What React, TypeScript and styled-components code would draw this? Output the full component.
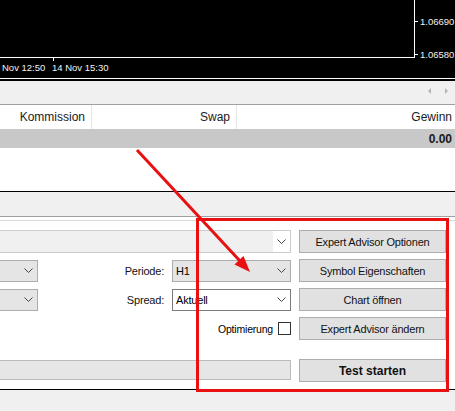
import styled, { createGlobalStyle } from "styled-components";

const GlobalStyle = createGlobalStyle`
    html, body {
        margin: 0;
        padding: 0;
        background: #f0f0f0;
    }
    body {
        font-family: "Liberation Sans", Arial, sans-serif;
        color: #000;
    }
`;

const Page = styled.div`
    position: relative;
    display: flex;
    flex-direction: column;
    width: 455px;
    height: 411px;
    overflow: hidden;
    background: #f0f0f0;
`;

const ChartPane = styled.div`
    height: 78px;
    background: #000;
    border-bottom: 1px solid #fff;
    box-shadow: 0 1px 0 #000, 0 2px 0 #000;
    margin-bottom: 2px;

    svg {
        display: block;
    }

    text {
        font-family: "Liberation Sans", Arial, sans-serif;
        font-size: 9.5px;
        fill: #f2f2f2;
    }
`;

const Toolbar = styled.div`
    display: flex;
    justify-content: flex-end;
    align-items: center;
    column-gap: 10px;
    height: 23px;
    padding-right: 6px;
    background: #f0f0f0;
    border-bottom: 1px solid #a0a0a0;
`;

const ScrollArrow = styled.svg`
    width: 6px;
    height: 8px;
    margin-bottom: 4px;
`;

const TableRow = styled.div<{ $head?: boolean }>`
    display: grid;
    grid-template-columns: 92px 145px 1fr;
    height: ${(p) => (p.$head ? "24px" : "19px")};
    background: ${(p) => (p.$head ? "#fff" : "#c8c8c8")};
    font-size: 12px;
    font-weight: ${(p) => (p.$head ? 400 : 700)};
    color: #1a1a1a;
`;

const TableCell = styled.div<{ $last?: boolean }>`
    display: flex;
    align-items: center;
    justify-content: flex-end;
    padding-right: ${(p) => (p.$last ? "3px" : "6px")};
    border-right: ${(p) => (p.$last ? "none" : "1px solid #e5e5e5")};
`;

const TableRowCell = styled(TableCell)`
    border-right: none;
`;

const TableBody = styled.div`
    height: 43px;
    background: #fff;
    border-bottom: 1px solid #000;
`;

const TabStrip = styled.div`
    height: 24px;
    background: #f0f0f0;
    border-bottom: 1px solid #a0a0a0;
`;

const TabGap = styled.div`
    height: 3px;
    background: #fff;
    border-bottom: 1px solid #d9d9d9;
`;

const SettingsPanel = styled.div`
    display: grid;
    grid-template-columns: 38px 118px 119px 147px;
    grid-template-rows: repeat(4, 23px) 36px;
    column-gap: 8px;
    row-gap: 6px;
    padding: 9px 9px 7px 0;
    background: #fff;
    border-bottom: 1px solid #000;
`;

const Footer = styled.div`
    flex: 1;
    background: #f0f0f0;
`;

const ComboBox = styled.div<{ $variant: "disabled" | "list" | "edit"; $span?: string }>`
    grid-column: ${(p) => p.$span || "auto"};
    align-self: center;
    display: flex;
    align-items: center;
    height: ${(p) => (p.$variant === "disabled" ? "23px" : "22px")};
    box-sizing: border-box;
    border: 1px solid
        ${(p) => (p.$variant === "edit" ? "#7a7a7a" : p.$variant === "disabled" ? "#cccccc" : "#adadad")};
    border-left: ${(p) => (p.$span ? "none" : "")};
    background: ${(p) => (p.$variant === "list" ? "#e5e5e5" : p.$variant === "disabled" ? "#f0f0f0" : "#fff")};
    font-size: 11px;
    letter-spacing: -0.2px;
`;

const ComboText = styled.span`
    flex: 1;
    padding-left: 3px;
    white-space: nowrap;
`;

const ComboArrow = styled.div<{ $white?: boolean }>`
    display: flex;
    align-items: center;
    justify-content: center;
    width: 17px;
    align-self: stretch;
    background: ${(p) => (p.$white ? "#fff" : "transparent")};
`;

const LeftCombo = styled(ComboBox)`
    border-left: none;
    justify-content: flex-end;
`;

const FieldLabel = styled.div`
    display: flex;
    align-items: center;
    justify-content: flex-end;
    font-size: 11px;
    letter-spacing: -0.2px;
    color: #111;
`;

const CheckRow = styled.div`
    grid-column: 3;
    grid-row: 4;
    display: flex;
    align-items: center;
    justify-content: flex-end;
    column-gap: 5px;
    font-size: 10.5px;
    letter-spacing: -0.2px;
`;

const CheckBox = styled.div`
    width: 13px;
    height: 13px;
    box-sizing: border-box;
    border: 1px solid #333;
    background: #fff;
`;

const Button = styled.div<{ $bold?: boolean; $row?: number }>`
    grid-column: 4;
    grid-row: ${(p) => p.$row};
    align-self: end;
    display: flex;
    align-items: center;
    justify-content: center;
    height: 23px;
    box-sizing: border-box;
    border: 1px solid #adadad;
    background: #e1e1e1;
    font-size: ${(p) => (p.$bold ? "12px" : "11px")};
    font-weight: ${(p) => (p.$bold ? 700 : 400)};
    letter-spacing: ${(p) => (p.$bold ? "0" : "-0.2px")};
    color: #111;
    white-space: nowrap;
`;

const ProgressBar = styled.div`
    grid-column: 1 / 4;
    grid-row: 5;
    align-self: end;
    height: 20px;
    margin-bottom: 2px;
    box-sizing: border-box;
    border: 1px solid #bcbcbc;
    border-left: none;
    background: #e6e6e6;
`;

const Annotation = styled.svg`
    position: absolute;
    left: 0;
    top: 0;
    pointer-events: none;
`;

function Chevron() {
    return (
        <svg width="9" height="5" viewBox="0 0 9 5">
            <path d="M0.5 0.5 L4.5 4.5 L8.5 0.5" fill="none" stroke="#444" strokeWidth="1" />
        </svg>
    );
}

function Chart() {
    return (
        <ChartPane>
            <svg width="455" height="78" viewBox="0 0 455 78">
                <line x1="414.5" y1="0" x2="414.5" y2="57.5" stroke="#fff" />
                <line x1="0" y1="57.5" x2="415" y2="57.5" stroke="#fff" />
                <line x1="415" y1="21.5" x2="418" y2="21.5" stroke="#fff" />
                <line x1="415" y1="54.5" x2="418" y2="54.5" stroke="#fff" />
                <line x1="53.5" y1="57" x2="53.5" y2="61" stroke="#fff" />
                <text x="420" y="25">1.06690</text>
                <text x="420" y="58">1.06580</text>
                <text x="2" y="71">Nov 12:50</text>
                <text x="52" y="71">14 Nov 15:30</text>
            </svg>
        </ChartPane>
    );
}

export default function App() {
    return (
        <Page>
            <GlobalStyle />
            <Chart />
            <Toolbar>
                <ScrollArrow viewBox="0 0 6 8">
                    <path d="M4 1 L1 4 L4 7 Z" fill="#b4b4b4" />
                </ScrollArrow>
                <ScrollArrow viewBox="0 0 6 8">
                    <path d="M2 1 L5 4 L2 7 Z" fill="#b4b4b4" />
                </ScrollArrow>
            </Toolbar>
            <TableRow $head>
                <TableCell>Kommission</TableCell>
                <TableCell>Swap</TableCell>
                <TableCell $last>Gewinn</TableCell>
            </TableRow>
            <TableRow>
                <TableRowCell />
                <TableRowCell />
                <TableRowCell $last>0.00</TableRowCell>
            </TableRow>
            <TableBody />
            <TabStrip />
            <TabGap />
            <SettingsPanel>
                <ComboBox $variant="disabled" $span="1 / 4">
                    <ComboText />
                    <ComboArrow $white>
                        <Chevron />
                    </ComboArrow>
                </ComboBox>
                <Button $row={1}>Expert Advisor Optionen</Button>

                <LeftCombo $variant="list">
                    <ComboArrow>
                        <Chevron />
                    </ComboArrow>
                </LeftCombo>
                <FieldLabel>Periode:</FieldLabel>
                <ComboBox $variant="list">
                    <ComboText>H1</ComboText>
                    <ComboArrow>
                        <Chevron />
                    </ComboArrow>
                </ComboBox>
                <Button $row={2}>Symbol Eigenschaften</Button>

                <LeftCombo $variant="list">
                    <ComboArrow>
                        <Chevron />
                    </ComboArrow>
                </LeftCombo>
                <FieldLabel>Spread:</FieldLabel>
                <ComboBox $variant="edit">
                    <ComboText>Aktuell</ComboText>
                    <ComboArrow>
                        <Chevron />
                    </ComboArrow>
                </ComboBox>
                <Button $row={3}>Chart öffnen</Button>

                <CheckRow>
                    Optimierung
                    <CheckBox />
                </CheckRow>
                <Button $row={4}>Expert Advisor ändern</Button>

                <ProgressBar />
                <Button $row={5} $bold>Test starten</Button>
            </SettingsPanel>
            <Footer />
            <Annotation width="455" height="411" viewBox="0 0 455 411">
                <rect x="197.5" y="219.5" width="250" height="171" fill="none" stroke="#e81010" strokeWidth="3" />
                <line x1="137" y1="150" x2="240" y2="261" stroke="#e81010" strokeWidth="3" />
                <polygon points="250,272 234.5,264.5 243.5,256" fill="#e81010" />
            </Annotation>
        </Page>
    );
}
